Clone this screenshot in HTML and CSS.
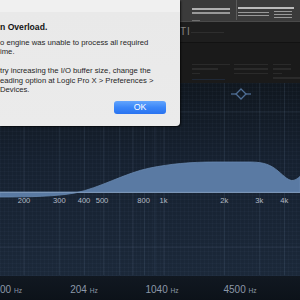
FILE: index.html
```html
<!DOCTYPE html>
<html lang="en">

<head>
    <meta charset="UTF-8">
    <meta name="viewport" content="width=device-width, initial-scale=1.0">
    <title>System Overload</title>
    <link rel="stylesheet" href="styles.css">
</head>

<body>

    <div class="plugin">
        <!-- barra superior (desfocada atrás do alerta) -->
        <div class="toolbar">
            <div class="group-a">
                <div class="bar bar-hi wide"></div>
                <div class="bar bar-mid wide gap-s"></div>
                <div class="bar bar-low short gap-l"></div>
            </div>
            <div class="divider"></div>
            <div class="group-b">
                <div class="bar bar-hi full"></div>
                <div class="sub-row">
                    <div class="sub-col left">
                        <div class="bar bar-mid"></div>
                        <div class="bar bar-mid"></div>
                    </div>
                    <div class="sub-col right">
                        <div class="bar bar-mid"></div>
                        <div class="bar bar-mid"></div>
                        <div class="bar bar-mid"></div>
                    </div>
                </div>
            </div>
        </div>

        <div class="header">
            <span class="header-title">TI</span>
            <div class="bar bar-dim header-bar"></div>
        </div>

        <div class="panel">
            <div class="panel-col col-a">
                <div class="bar bar-faint w38"></div>
                <div class="bar bar-faint w26"></div>
                <div class="bar bar-faint w8"></div>
                <div class="bar bar-blue w33"></div>
            </div>
            <div class="panel-col col-b">
                <div class="bar bar-faint w34"></div>
                <div class="bar bar-faint w34"></div>
                <div class="bar bar-faint w34"></div>
            </div>
            <div class="panel-col col-c">
                <div class="bar bar-faint w18"></div>
                <div class="bar bar-faint w18"></div>
                <div class="bar bar-faint w9"></div>
                <div class="bar bar-faint w27"></div>
            </div>
        </div>

        <!-- gráfico do EQ -->
        <div class="graph">
            <svg class="eq" viewBox="0 82 300 193" width="300" height="193">
                <g class="grid">
                    <line x1="24" y1="82" x2="24" y2="274" />
                    <line x1="59.3" y1="82" x2="59.3" y2="274" />
                    <line x1="84.3" y1="82" x2="84.3" y2="274" />
                    <line x1="103.7" y1="82" x2="103.7" y2="274" />
                    <line x1="119.6" y1="82" x2="119.6" y2="274" />
                    <line x1="133" y1="82" x2="133" y2="274" />
                    <line x1="144.6" y1="82" x2="144.6" y2="274" />
                    <line x1="154.9" y1="82" x2="154.9" y2="274" />
                    <line x1="164" y1="82" x2="164" y2="274" />
                    <line x1="224.3" y1="82" x2="224.3" y2="274" />
                    <line x1="259.6" y1="82" x2="259.6" y2="274" />
                    <line x1="284.6" y1="82" x2="284.6" y2="274" />
                    <line x1="0" y1="111" x2="300" y2="111" />
                    <line x1="0" y1="246" x2="300" y2="246" />
                </g>

                <path class="curve" d="M0 191 L0 196 C30 196 55 195.5 75 192 C100 187 125 172 150 167 C170 163 190 161 215 161 L250 161 C264 161 271 164 278 170 C285 176 289 180 293 179.5 C296 179 298 177 300 175.5 L300 191 Z" />
                <line class="zero" x1="0" y1="191.5" x2="300" y2="191.5" />

                <g class="freq">
                    <text x="24" y="201.7">200</text>
                    <text x="59.3" y="201.7">300</text>
                    <text x="84" y="201.7">400</text>
                    <text x="102" y="201.7">500</text>
                    <text x="143.6" y="201.7">800</text>
                    <text x="163.5" y="201.7">1k</text>
                    <text x="224.3" y="201.7">2k</text>
                    <text x="259.3" y="201.7">3k</text>
                    <text x="284.3" y="201.7">4k</text>
                </g>

                <g class="handle">
                    <line x1="231" y1="93" x2="236" y2="93" />
                    <line x1="246" y1="93" x2="251" y2="93" />
                    <path d="M241 88 L246 93 L241 98 L236 93 Z" />
                </g>
            </svg>
        </div>

        <div class="footer">
            <span class="hz-label first">00 <small>Hz</small></span>
            <span class="hz-label">204 <small>Hz</small></span>
            <span class="hz-label">1040 <small>Hz</small></span>
            <span class="hz-label">4500 <small>Hz</small></span>
        </div>
    </div>

    <!-- Alerta -->
    <div class="dialog">
        <h3 class="dialog-title">n Overload.</h3>
        <p class="dialog-text">o engine was unable to process all required<br>ime.</p>
        <p class="dialog-text second">try increasing the I/O buffer size, change the<br>eading option at Logic Pro X &gt; Preferences &gt;<br>Devices.</p>
        <div class="dialog-actions">
            <button type="button" class="ok-btn">OK</button>
        </div>
    </div>

</body>

</html>
```

FILE: styles.css
```css
/* Resetando estilos */
* {
    margin: 0;
    padding: 0;
    box-sizing: border-box;
}

body {
    width: 300px;
    height: 300px;
    overflow: hidden;
    position: relative;
    background: #1a1a1a;
    font-family: "Liberation Sans", Arial, sans-serif;
}

.plugin {
    display: flex;
    flex-direction: column;
    height: 300px;
}

/* Barra superior */
.toolbar {
    flex: 0 0 21px;
    display: flex;
    align-items: flex-start;
    padding-left: 192px;
    background: #3b3b3b;
    border-bottom: 1px solid #4a4a4a;
}

.toolbar > div {
    filter: blur(0.4px);
}

.bar {
    height: 1px;
    background: #9c9c9c;
}

.bar-hi {
    height: 2px;
    background: #b0b0b0;
}

.bar-mid {
    background: #999;
}

.bar-low {
    background: #707070;
}

.group-a {
    width: 38px;
    padding-top: 8px;
    display: flex;
    flex-direction: column;
}

.wide {
    width: 38px;
}

.short {
    width: 8px;
}

.gap-s {
    margin-top: 2px;
    height: 1.5px;
}

.gap-l {
    margin-top: 6px;
}

.divider {
    width: 1px;
    height: 20px;
    margin-left: 6px;
    background: #5a5a5a;
}

.group-b {
    width: 56px;
    margin-left: 1px;
    padding-top: 7px;
    display: flex;
    flex-direction: column;
}

.full {
    width: 56px;
    background: #bbb;
}

.sub-row {
    display: flex;
    gap: 5px;
    margin-top: 3px;
}

.sub-col {
    display: flex;
    flex-direction: column;
    gap: 2px;
}

.sub-col.left {
    width: 31px;
}

.sub-col.right {
    width: 18px;
    margin-top: -1px;
}

/* Cabeçalho escuro */
.header {
    flex: 0 0 20px;
    display: flex;
    align-items: center;
    padding-left: 180px;
    background: #1e1e1e;
}

.header-title {
    font-size: 10px;
    color: #858585;
    letter-spacing: 1px;
    line-height: 10px;
}

.bar-dim {
    background: #2e2e2e;
}

.header-bar {
    width: 33px;
    margin-top: 2px;
}

.panel {
    flex: 0 0 41px;
    display: flex;
    padding-left: 192px;
    background: #1a1a1a;
    border-top: 1px solid #121212;
}

.panel-col {
    display: flex;
    flex-direction: column;
    padding-top: 21px;
    gap: 3px;
}

.col-a {
    width: 42px;
}

.col-b {
    width: 39px;
}

.bar-faint {
    height: 1.5px;
    background: #2a2a2a;
}

.bar-blue {
    margin-top: 2px;
    background: #1f2836;
}

.w38 { width: 38px; }
.w34 { width: 34px; }
.w33 { width: 33px; }
.w27 { width: 27px; }
.w26 { width: 26px; }
.w18 { width: 18px; }
.w9 { width: 9px; }
.w8 { width: 8px; }

/* Gráfico */
.graph {
    flex: 0 0 193px;
    background-color: #141d29;
    background-image:
        repeating-linear-gradient(0deg, rgba(140, 170, 210, 0.03) 0 1px, transparent 1px 4px),
        repeating-linear-gradient(90deg, rgba(140, 170, 210, 0.03) 0 1px, transparent 1px 4px),
        linear-gradient(#10171f, #162130 40%, #1b2839);
}

.eq {
    display: block;
}

.grid line {
    stroke: rgba(130, 155, 190, 0.12);
    stroke-width: 1;
}

.curve {
    fill: #5a7aa3;
    stroke: #6889b1;
    stroke-width: 0.8;
}

.zero {
    stroke: #7b95b6;
    stroke-width: 1;
}

.freq text {
    font-family: "Liberation Sans", Arial, sans-serif;
    font-size: 7.6px;
    fill: #b4bcc7;
    text-anchor: middle;
}

.handle line,
.handle path {
    fill: none;
    stroke: #4f6e95;
    stroke-width: 1.3;
}

.footer {
    flex: 0 0 25px;
    display: flex;
    padding-top: 9px;
    background: linear-gradient(#111821, #0c1219);
}

.hz-label {
    flex: 0 0 78px;
    text-align: center;
    font-size: 10px;
    line-height: 10px;
    color: #8c98a8;
}

.hz-label.first {
    flex: 0 0 45px;
    text-align: left;
}

.hz-label small {
    font-size: 6.6px;
}

/* Alerta */
.dialog {
    position: absolute;
    top: 0;
    left: 0;
    width: 180px;
    height: 126px;
    padding-top: 22px;
    background: linear-gradient(#f0f0f0 0, #f0f0f0 12px, #e9e9e9 12px, #ebebeb);
    border-bottom-right-radius: 4px;
    box-shadow: 1px 1px 2px rgba(0, 0, 0, 0.7);
    color: #222;
}

.dialog-title {
    font-size: 8.6px;
    line-height: 11px;
    font-weight: bold;
    color: #141414;
}

.dialog-text {
    margin-top: 4.5px;
    font-size: 7.7px;
    line-height: 9.7px;
    color: #262626;
}

.dialog-text.second {
    margin-top: 9px;
}

.dialog-actions {
    display: flex;
    justify-content: flex-end;
    padding-right: 14px;
    margin-top: 6px;
}

.ok-btn {
    width: 52px;
    height: 13px;
    border: none;
    border-radius: 3px;
    background: linear-gradient(#63a5fd, #3a86f8 50%, #2a73f0);
    color: #fff;
    font-family: "Liberation Sans", Arial, sans-serif;
    font-size: 8.8px;
    line-height: 13px;
}
```
